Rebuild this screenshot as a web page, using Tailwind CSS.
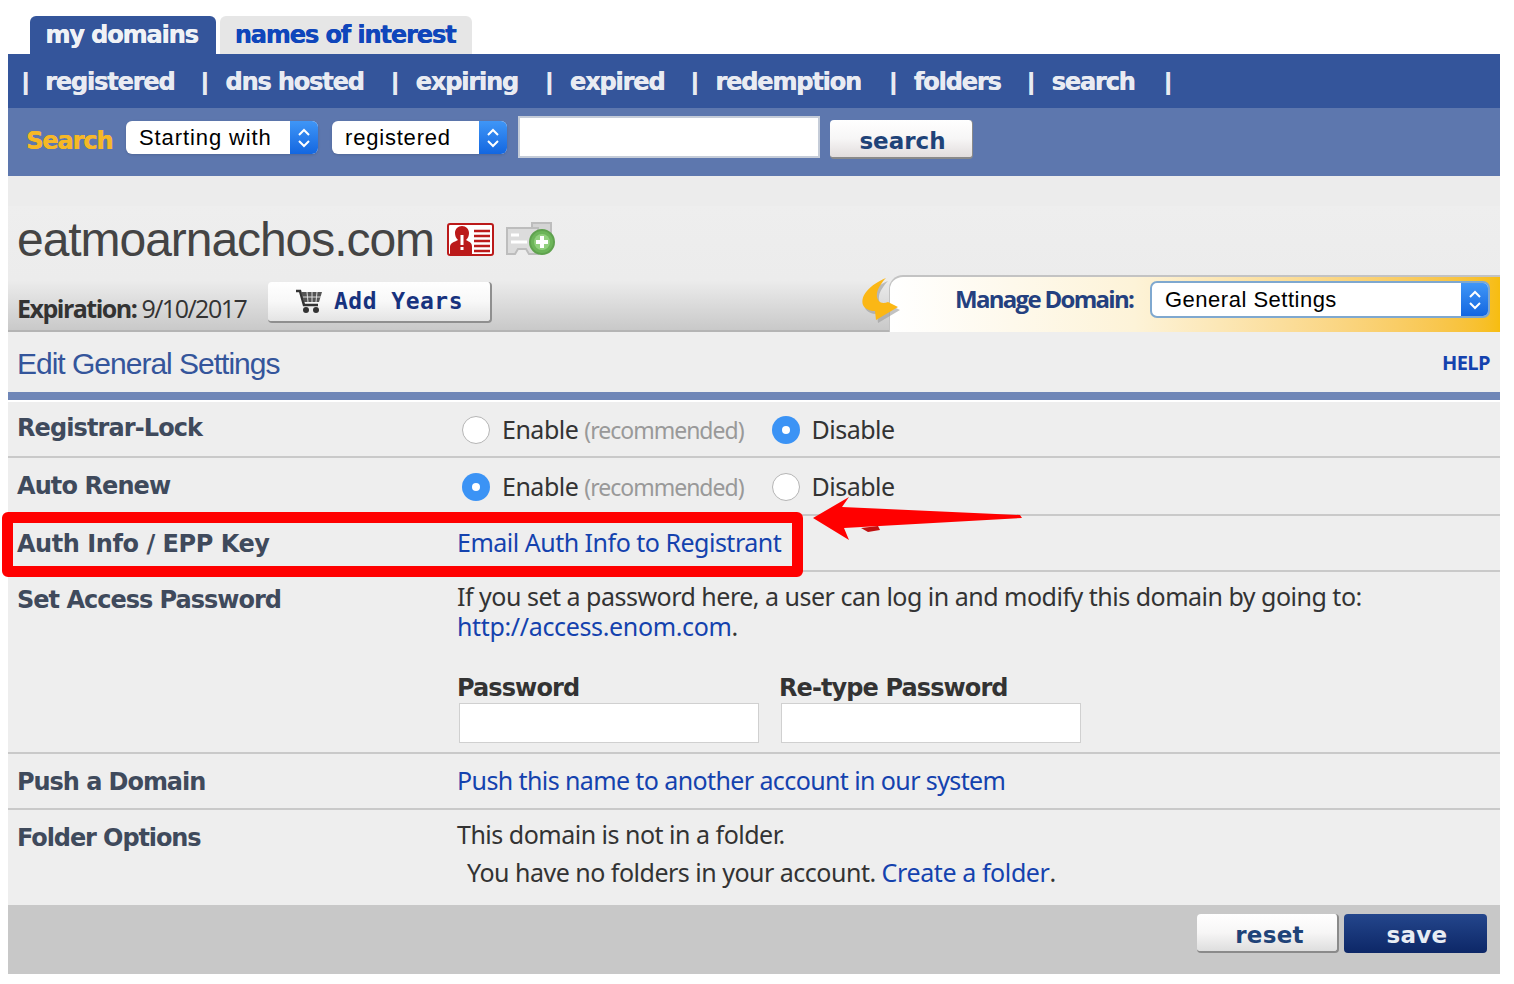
<!DOCTYPE html>
<html lang="en">
<head>
  <meta charset="UTF-8">
  <meta name="viewport" content="width=device-width, initial-scale=1.0">
  <title>Edit General Settings</title>
  <script src="https://cdn.jsdelivr.net/npm/@tailwindcss/browser@4"></script>
</head>
<body class="bg-white min-h-screen font-['DejaVu_Sans',sans-serif] overflow-hidden">
  <div class="relative w-[1514px] h-[984px] pl-2 pt-4">
    <div class="w-[1492px]">
      <!-- Tabs -->
      <div class="flex h-[38px] pl-[22px] gap-1 text-[24px] font-bold tracking-[-1.1px] leading-[38px] [text-shadow:0.4px_0_0_currentColor]">
        <a class="w-[186px] rounded-t-md bg-[#34559b] text-[#f0f2f6] text-center pr-[3px]">my domains</a>
        <a class="w-[252px] rounded-t-md bg-[#e6e6e6] text-[#0f46bb] text-center pr-[2px]">names of interest</a>
      </div>

      <!-- Nav -->
      <nav class="h-[54px] bg-[#34559b] flex items-center pl-[14px] pt-[1px] text-[24px] font-bold tracking-[-1.15px] text-[#e9ebf2] [text-shadow:0.4px_0_0_currentColor]">
        <span class="w-[23px] font-['Liberation_Sans'] font-bold">|</span><a>registered</a>
        <span class="w-[24px] ml-[27px] font-['Liberation_Sans'] font-bold">|</span><a>dns hosted</a>
        <span class="w-[24px] ml-[28px] font-['Liberation_Sans'] font-bold">|</span><a>expiring</a>
        <span class="w-[24px] ml-[28px] font-['Liberation_Sans'] font-bold">|</span><a>expired</a>
        <span class="w-[24px] ml-[27px] font-['Liberation_Sans'] font-bold">|</span><a>redemption</a>
        <span class="w-[24px] ml-[29px] font-['Liberation_Sans'] font-bold">|</span><a>folders</a>
        <span class="w-[24px] ml-[27px] font-['Liberation_Sans'] font-bold">|</span><a>search</a>
        <span class="w-[24px] ml-[30px] font-['Liberation_Sans'] font-bold">|</span>
      </nav>

      <!-- Search bar -->
      <div class="h-[68px] bg-[#5d77ae] flex items-start pl-[18px] pt-[8px]">
        <span class="mt-[9px] w-[100px] text-[24px] font-bold tracking-[-1.1px] text-[#f6b826] leading-[32px] [text-shadow:0.4px_0_0_currentColor]">Search</span>
        <div class="mt-[5px] w-[192px] h-[33px] flex rounded-[6px] overflow-hidden bg-white shadow-sm">
          <span class="flex-1 pl-[13px] text-[22px] leading-[34px] font-['Liberation_Sans'] tracking-[0.9px] text-black">Starting with</span>
          <span class="w-[28px] bg-gradient-to-b from-[#3f96f7] to-[#1366e0] flex items-center justify-center">
            <svg width="16" height="26" viewBox="0 0 16 26" fill="none" stroke="#fff" stroke-width="2"><path d="M3 10l5-5 5 5M3 16l5 5 5-5"/></svg>
          </span>
        </div>
        <div class="mt-[5px] ml-[14px] w-[175px] h-[33px] flex rounded-[6px] overflow-hidden bg-white shadow-sm">
          <span class="flex-1 pl-[13px] text-[22px] leading-[34px] font-['Liberation_Sans'] tracking-[0.8px] text-black">registered</span>
          <span class="w-[28px] bg-gradient-to-b from-[#3f96f7] to-[#1366e0] flex items-center justify-center">
            <svg width="16" height="26" viewBox="0 0 16 26" fill="none" stroke="#fff" stroke-width="2"><path d="M3 10l5-5 5 5M3 16l5 5 5-5"/></svg>
          </span>
        </div>
        <div class="ml-[11px] w-[302px] h-[42px] bg-white border-[2px] border-[#c5ccd8]"></div>
        <button class="ml-[10px] mt-[4px] w-[143px] h-[39px] rounded-[4px] bg-gradient-to-b from-white via-[#f7f6f6] to-[#e2dddd] border-b-[2px] border-r border-[#8a8a8a] text-[#1f4378] text-[23px] font-bold leading-[30px] pl-[3px] pt-[4px]">search</button>
      </div>

      <div class="h-[30px] bg-[#ececec]"></div>

      <!-- Domain header -->
      <div class="relative h-[126px] bg-gradient-to-b from-[#eeeeee] via-[#ececec] via-60% to-[#c9c9c9] border-b-[2px] border-[#b4b4b4]">
        <div class="flex items-center pl-[9px] pt-[9px] h-[59px]">
          <h1 class="text-[48px] leading-[52px] font-['Liberation_Sans'] tracking-[-1.05px] text-[#444444]">eatmoarnachos.com</h1>
          <svg class="ml-[13px] mt-[-2px]" width="47" height="33" viewBox="0 0 47 33">
            <rect x="1" y="1" width="45" height="31" rx="2" fill="#fff" stroke="#bb1a1a" stroke-width="2"/>
            <path d="M3 31v-7c0-4 4-5 8-7-2-2-3-4-3-7 0-4 3-7 7-7s7 3 7 7c0 3-1 5-3 7 4 2 6 3 6 7v7z" fill="#bb1a1a"/>
            <rect x="13.5" y="12" width="3" height="10" fill="#fff"/><rect x="13.5" y="24" width="3" height="3" fill="#fff"/>
            <path d="M27 8h16M27 13h16M27 18h16M27 23h16M27 28h16" stroke="#bb1a1a" stroke-width="2.5"/>
          </svg>
          <svg class="ml-[11px] mt-[-3px]" width="52" height="36" viewBox="0 0 52 36">
            <path d="M27 7V2h19v14H27z" fill="#d4d4d4" stroke="#bdbdbd" stroke-width="2"/>
            <path d="M2 7h31v26h-9l-3-5h-8l-3 5H2z" fill="#dcdcdc" stroke="#bdbdbd" stroke-width="2"/>
            <path d="M6 14h8M6 21h16" stroke="#fff" stroke-width="3"/>
            <circle cx="37" cy="21" r="12" fill="#6db55a" stroke="#5fa24e" stroke-width="2"/>
            <circle cx="37" cy="21" r="8" fill="#91cf7e"/>
            <path d="M37 15v12M31 21h12" stroke="#fff" stroke-width="4"/>
          </svg>
        </div>
        <div class="flex items-start pl-[9px] mt-[17px]">
          <span class="mt-[8px] w-[251px] text-[25px] leading-[36px] tracking-[-1.5px] text-[#333333] font-['Open_Sans']"><b>Expiration:</b> 9/10/2017</span>
          <button class="w-[224px] h-[41px] rounded-[4px] bg-gradient-to-b from-white via-[#f8f8f8] to-[#e4e4e4] border-b-[2px] border-r-[2px] border-[#8f8f8f] flex items-center justify-center gap-[11px] text-[#17327e] text-[23px] font-bold tracking-[0.5px] font-['DejaVu_Sans_Mono']">
            <svg width="28" height="25" viewBox="0 0 28 25"><path d="M1 2h4l4 14h14" fill="none" stroke="#333" stroke-width="2.6"/><path d="M6 3h21l-3 10H9z" fill="#555"/><path d="M12 3l1 10M17 3v10M22 3l-1 10M8 8h18" stroke="#ddd" stroke-width="1"/><circle cx="11" cy="21" r="3" fill="#333"/><circle cx="21" cy="21" r="3" fill="#333"/></svg>
            Add Years
          </button>
        </div>
        <!-- Manage Domain tab -->
        <div class="absolute left-[881px] right-0 top-[69px] h-[57px] rounded-tl-[14px] border-t-[2px] border-l border-[#c3c3c3] bg-gradient-to-r from-white via-[#fdf3d8] via-40% to-[#f7bd0e] flex items-start pl-[65px] pt-[4px]">
          <span class="w-[195px] shrink-0 whitespace-nowrap text-[24px] leading-[36px] font-bold font-['Open_Sans'] tracking-[-1.7px] text-[#24407f]">Manage Domain:</span>
          <div class="shrink-0 w-[340px] h-[37px] flex rounded-[7px] overflow-hidden bg-white border-[2px] border-[#7fa8cf]">
            <span class="flex-1 pl-[13px] text-[22px] leading-[33px] font-['Liberation_Sans'] tracking-[0.5px] text-black">General Settings</span>
            <span class="w-[27px] bg-gradient-to-b from-[#3f96f7] to-[#1366e0] flex items-center justify-center">
              <svg width="16" height="26" viewBox="0 0 16 26" fill="none" stroke="#fff" stroke-width="2"><path d="M3 10l5-5 5 5M3 16l5 5 5-5"/></svg>
            </span>
          </div>
        </div>
        <svg class="absolute left-[847px] top-[68px]" width="50" height="52" viewBox="0 0 50 52">
          <path d="M31 4C15 11 5 21 8 31c2 4 7 6 12 6l1 9 22-13-10-5c-8 3-12-2-11-9 1-5 5-11 9-15z" fill="#9a9a9a" opacity=".6" transform="translate(2 3)"/>
          <path d="M31 4C15 11 5 21 8 31c2 4 7 6 12 6l1 9 22-13-10-5c-8 3-12-2-11-9 1-5 5-11 9-15z" fill="#fbb715"/>
        </svg>
      </div>

      <!-- Section title -->
      <div class="h-[60px] bg-[#eeeeee] flex items-start justify-between pl-[9px] pr-[10px]">
        <h2 class="mt-[12px] text-[30px] leading-[40px] font-['Liberation_Sans'] tracking-[-1px] text-[#34559b]">Edit General Settings</h2>
        <a class="mt-[17px] text-[20px] leading-[28px] font-bold font-['Open_Sans'] tracking-[-0.6px] text-[#1442ae]">HELP</a>
      </div>
      <div class="h-[8px] bg-[#6f86b7]"></div>
      <div class="h-[2px] bg-white"></div>

      <!-- Rows -->
      <div class="bg-[#eeeeee] text-[25px] tracking-[-0.5px] font-['Noto_Sans'] text-[#333333]">
        <div class="h-[56px] grid grid-cols-[440px_1fr] pl-[9px] border-b-[2px] border-[#c9c9c9]">
          <span class="mt-[8px] leading-[36px] font-bold font-['DejaVu_Sans'] text-[24px] tracking-[-0.9px] text-[#3f4a5c]">Registrar-Lock</span>
          <div class="flex items-center h-[55px] pl-[5px]">
            <span class="w-[28px] h-[28px] rounded-full bg-white border border-[#b5b5b5]"></span>
            <span class="ml-[12px]">Enable <span class="text-[23px] tracking-[-1px] text-[#999999]">(recommended)</span></span>
            <span class="ml-[28px] w-[28px] h-[28px] rounded-full bg-[#3b93f5] flex items-center justify-center"><span class="w-[8px] h-[8px] rounded-full bg-white"></span></span>
            <span class="ml-[12px]">Disable</span>
          </div>
        </div>
        <div class="h-[58px] grid grid-cols-[440px_1fr] pl-[9px] border-b-[2px] border-[#c9c9c9]">
          <span class="mt-[10px] leading-[36px] font-bold font-['DejaVu_Sans'] text-[24px] tracking-[-0.9px] text-[#3f4a5c]">Auto Renew</span>
          <div class="flex items-center h-[58px] pl-[5px]">
            <span class="w-[28px] h-[28px] rounded-full bg-[#3b93f5] flex items-center justify-center"><span class="w-[8px] h-[8px] rounded-full bg-white"></span></span>
            <span class="ml-[12px]">Enable <span class="text-[23px] tracking-[-1px] text-[#999999]">(recommended)</span></span>
            <span class="ml-[28px] w-[28px] h-[28px] rounded-full bg-white border border-[#b5b5b5]"></span>
            <span class="ml-[12px]">Disable</span>
          </div>
        </div>
        <div class="h-[56px] grid grid-cols-[440px_1fr] pl-[9px] border-b-[2px] border-[#c9c9c9]">
          <span class="mt-[10px] leading-[36px] font-bold font-['DejaVu_Sans'] text-[24px] tracking-[-0.45px] text-[#3f4a5c]">Auth Info / EPP Key</span>
          <a class="mt-[8px] leading-[36px] text-[#1442ae]">Email Auth Info to Registrant</a>
        </div>
        <div class="h-[182px] grid grid-cols-[440px_1fr] pl-[9px] border-b-[2px] border-[#c9c9c9]">
          <span class="mt-[10px] leading-[36px] font-bold font-['DejaVu_Sans'] text-[24px] tracking-[-1px] text-[#3f4a5c]">Set Access Password</span>
          <div class="pt-[9px]">
            <p class="leading-[30px]">If you set a password here, a user can log in and modify this domain by going to:<br><a class="tracking-[-0.35px] text-[#1442ae]">http://access.enom.com</a>.</p>
            <div class="flex gap-[21px] mt-[32px]">
              <label class="w-[301px]"><span class="block leading-[30px] font-bold font-['DejaVu_Sans'] text-[24px] tracking-[-0.9px]">Password</span><input type="password" class="block w-[300px] h-[40px] ml-[2px] bg-white border border-[#d0d0d0]"></label>
              <label class="w-[301px]"><span class="block leading-[30px] font-bold font-['DejaVu_Sans'] text-[24px] tracking-[-0.9px]">Re-type Password</span><input type="password" class="block w-[300px] h-[40px] ml-[2px] bg-white border border-[#d0d0d0]"></label>
            </div>
          </div>
        </div>
        <div class="h-[56px] grid grid-cols-[440px_1fr] pl-[9px] border-b-[2px] border-[#c9c9c9]">
          <span class="mt-[10px] leading-[36px] font-bold font-['DejaVu_Sans'] text-[24px] tracking-[-1.05px] text-[#3f4a5c]">Push a Domain</span>
          <a class="mt-[8px] leading-[36px] tracking-[-0.6px] text-[#1442ae]">Push this name to another account in our system</a>
        </div>
        <div class="h-[95px] grid grid-cols-[440px_1fr] pl-[9px]">
          <span class="mt-[10px] leading-[36px] font-bold font-['DejaVu_Sans'] text-[24px] tracking-[-1.1px] text-[#3f4a5c]">Folder Options</span>
          <div class="pt-[6px]">
            <p class="leading-[36px]">This domain is not in a folder.</p>
            <p class="leading-[36px] mt-[2px] pl-[10px]">You have no folders in your account. <a class="tracking-[-0.4px] text-[#1442ae]">Create a folder</a>.</p>
          </div>
        </div>
      </div>

      <!-- Footer -->
      <div class="h-[69px] bg-[#c8c8c8] flex justify-end items-start pt-[9px] pr-[13px] gap-[5px]">
        <button class="w-[142px] h-[39px] rounded-[4px] bg-gradient-to-b from-white via-[#f7f6f6] to-[#dedede] border-b-[2px] border-r-[2px] border-[#8a8a8a] text-[#1f4378] text-[23px] font-bold tracking-[0.3px] leading-[30px] pl-[5px] pt-[4px]">reset</button>
        <button class="w-[143px] h-[39px] rounded-[4px] bg-gradient-to-b from-[#24468c] to-[#0d2767] text-[#e8ecf4] text-[23px] font-bold tracking-[0.3px] leading-[30px] pl-[3px] pt-[3px]">save</button>
      </div>
    </div>

    <!-- Annotation overlay -->
    <div class="absolute left-[2px] top-[512px] w-[801px] h-[65px] rounded-[6px] border-[11px] border-[#ff0000]"></div>
    <svg class="absolute left-[808px] top-[495px]" width="216" height="50" viewBox="0 0 216 50">
      <path d="M53 33l17-2 2 4-12 2z" fill="#c01010"/>
      <path d="M5 23L41 2l-7 10 178 8 2 3-178 10 5 12z" fill="#ff0000"/>
    </svg>
  </div>
</body>
</html>
